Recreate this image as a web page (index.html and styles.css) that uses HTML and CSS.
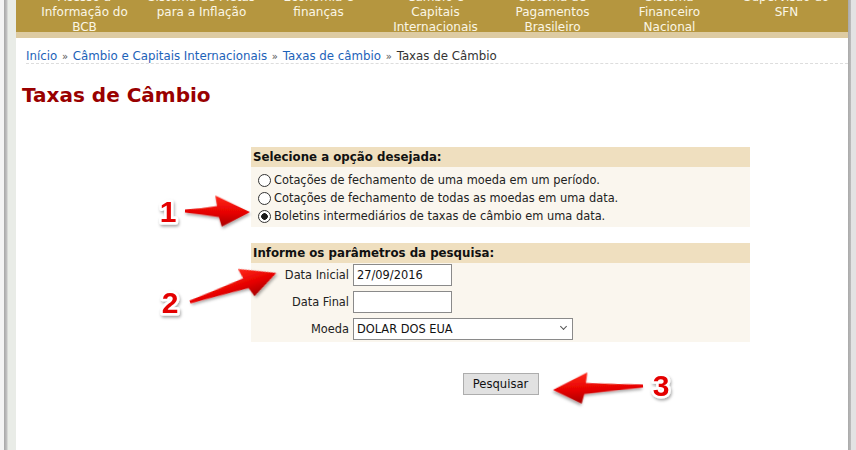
FILE: index.html
```html
<!DOCTYPE html>
<html lang="pt-BR">
<head>
    <meta charset="UTF-8">
    <meta name="viewport" content="width=device-width, initial-scale=1.0">
    <title>Taxas de Câmbio</title>
    <link rel="stylesheet" href="styles.css">
</head>
<body>
    <div class="page">
        <nav class="topnav">
            <ul class="topnav-list">
                <li>Acesso à<br>Informação do<br>BCB</li>
                <li>Sistema de Metas<br>para a Inflação</li>
                <li>Economia e<br>finanças</li>
                <li>Câmbio e<br>Capitais<br>Internacionais</li>
                <li>Sistema de<br>Pagamentos<br>Brasileiro</li>
                <li>Sistema<br>Financeiro<br>Nacional</li>
                <li>Supervisão do<br>SFN</li>
            </ul>
        </nav>

        <div class="content">
            <div class="breadcrumb">
                <a href="#">Início</a> <span class="sep">»</span>
                <a href="#">Câmbio e Capitais Internacionais</a> <span class="sep">»</span>
                <a href="#">Taxas de câmbio</a> <span class="sep">»</span>
                <span class="current">Taxas de Câmbio</span>
            </div>

            <h1>Taxas de Câmbio</h1>

            <form class="search" onsubmit="return false">
                <div class="panel">
                    <div class="panel-head">Selecione a opção desejada:</div>
                    <div class="panel-body options">
                        <label class="opt"><input type="radio" name="tipo">Cotações de fechamento de uma moeda em um período.</label>
                        <label class="opt"><input type="radio" name="tipo">Cotações de fechamento de todas as moedas em uma data.</label>
                        <label class="opt"><input type="radio" name="tipo" checked>Boletins intermediários de taxas de câmbio em uma data.</label>
                    </div>
                </div>

                <div class="panel panel-params">
                    <div class="panel-head">Informe os parâmetros da pesquisa:</div>
                    <div class="panel-body params">
                        <label for="dataInicial">Data Inicial</label>
                        <input type="text" id="dataInicial" class="field" value="27/09/2016">
                        <label for="dataFinal">Data Final</label>
                        <input type="text" id="dataFinal" class="field" value="">
                        <label for="moeda">Moeda</label>
                        <span class="select-wrap">
                            <select id="moeda" class="field field-select">
                                <option>DOLAR DOS EUA</option>
                            </select>
                        </span>
                    </div>
                </div>

                <div class="actions">
                    <button type="submit">Pesquisar</button>
                </div>
            </form>
        </div>
    </div>

    <!-- anotações (setas numeradas) -->
    <svg class="callouts" width="856" height="450" viewBox="0 0 856 450">
        <defs>
            <linearGradient id="redArrow" x1="0" y1="0" x2="0" y2="1">
                <stop offset="0" stop-color="#ff2a1a"/>
                <stop offset="0.55" stop-color="#e60000"/>
                <stop offset="1" stop-color="#a80000"/>
            </linearGradient>
            <filter id="shadow" x="-30%" y="-30%" width="160%" height="160%">
                <feDropShadow dx="1" dy="2" stdDeviation="1.4" flood-color="#000" flood-opacity="0.35"/>
            </filter>
        </defs>

        <g transform="translate(185,211) rotate(1)">
            <path class="arrow" d="M0,-1.5 Q16,-2.5 32,-5.5 L30,-16 L65,0 L37,15 L34,5.5 Q16,3 0,1.5 Z"/>
        </g>
        <g transform="translate(190,302) rotate(-18.6)">
            <path class="arrow" d="M0,-1.5 Q28,-3 58,-5.5 L56,-16 L91,0 L63,15 L60,5.5 Q28,3 0,1.5 Z"/>
        </g>
        <g transform="translate(643,386) rotate(-2.5) scale(-1,1)">
            <path class="arrow" d="M0,-1.5 Q28,-3 57,-5.5 L55,-16 L90,0 L62,15 L59,5.5 Q28,3 0,1.5 Z"/>
        </g>

        <text class="num" x="168" y="222">1</text>
        <text class="num" x="170" y="313">2</text>
        <text class="num" x="661" y="396">3</text>
    </svg>
</body>
</html>
```

FILE: styles.css
```css
body {
    margin: 0;
    min-height: 450px;
    position: relative;
    font-family: "DejaVu Sans", Verdana, sans-serif;
    font-size: 12px;
    color: #222;
    background: linear-gradient(to right,
        #f4f4f4 0, #f4f4f4 4px,
        #a6a6a6 4px, #c4c4c4 7px,
        #e9ece7 8px, #e9ece7 16px,
        #fff 16px, #fff 848px,
        #a9a9a9 848px, #bdbdbd 851px,
        #e3e3e3 851px);
}
.page {
    margin: 0 8px 0 16px;
    min-height: 450px;
}

/* menu superior */
.topnav {
    height: 32px;
    overflow: hidden;
    background: #b5963f;
    border-bottom: 6px solid #ddcba2;
}
.topnav-list {
    display: flex;
    list-style: none;
    margin: -10px 0 0;
    padding: 0 0 0 10px;
}
.topnav-list li {
    width: 117px;
    text-align: center;
    line-height: 15px;
    color: #fbf6e6;
    white-space: nowrap;
}

.content {
    padding-left: 6px;
}
.breadcrumb {
    margin: 10px 0 0 4px;
    padding-top: 2px;
    line-height: 13px;
    font-size: 11.8px;
    border-bottom: 1px dashed #dddddd;
}
.breadcrumb a {
    color: #1c62b9;
    text-decoration: none;
}
.breadcrumb .sep {
    color: #555;
    font-size: 10px;
    margin: 0 1px;
}
.breadcrumb .current {
    color: #333;
}

h1 {
    margin: 19px 0 0;
    font-size: 20px;
    line-height: 24px;
    font-weight: bold;
    color: #990000;
}

/* formulário */
.search {
    margin: 40px 0 0 229px;
    width: 499px;
    font-size: 11.4px;
}
.panel-head {
    height: 20px;
    line-height: 20px;
    padding-left: 2px;
    font-size: 11.8px;
    font-weight: bold;
    background: #efdfbf;
    color: #111;
}
.panel-body {
    background: #faf6ee;
}
.options {
    padding: 4px 0 2px 7px;
}
.opt {
    display: flex;
    align-items: center;
    height: 18px;
}
.opt input {
    appearance: none;
    -webkit-appearance: none;
    width: 13px;
    height: 13px;
    margin: 0 3px 0 0;
    border: 1px solid #333;
    border-radius: 50%;
    background: #fff;
}
.opt input:checked {
    background: radial-gradient(circle, #1a1a1a 0, #1a1a1a 3px, #fff 3.6px);
}

.panel-params {
    margin-top: 16px;
}
.params {
    display: grid;
    grid-template-columns: 98px auto;
    column-gap: 4px;
    row-gap: 5px;
    align-items: center;
    justify-items: start;
    padding: 1px 0 2px;
}
.params label {
    justify-self: end;
}
.field {
    box-sizing: border-box;
    width: 99px;
    height: 22px;
    margin: 0;
    padding: 0 3px;
    border: 1px solid #8a8a8a;
    background: #fff;
    font-family: "DejaVu Sans", Verdana, sans-serif;
    font-size: 11.4px;
    color: #111;
}
.select-wrap {
    position: relative;
    display: block;
}
.field-select {
    width: 220px;
    appearance: none;
    -webkit-appearance: none;
    border-radius: 0;
}
.select-wrap::after {
    content: "";
    position: absolute;
    right: 7px;
    top: 6px;
    width: 4px;
    height: 4px;
    border-right: 1px solid #555;
    border-bottom: 1px solid #555;
    transform: rotate(45deg);
}

.actions {
    margin-top: 31px;
    text-align: center;
}
.actions button {
    width: 76px;
    height: 22px;
    padding: 0;
    background: #e1e1e1;
    border: 1px solid #adadad;
    font-family: "DejaVu Sans", Verdana, sans-serif;
    font-size: 11.6px;
    color: #111;
}

/* setas de anotação */
.callouts {
    position: absolute;
    top: 0;
    left: 0;
    pointer-events: none;
}
.arrow {
    fill: url(#redArrow);
    filter: url(#shadow);
}
.num {
    font-family: "Liberation Sans", Arial, sans-serif;
    font-weight: bold;
    font-size: 30px;
    text-anchor: middle;
    fill: #e40000;
    stroke: #fff;
    stroke-width: 5px;
    stroke-linejoin: round;
    paint-order: stroke;
    filter: url(#shadow);
}
```
